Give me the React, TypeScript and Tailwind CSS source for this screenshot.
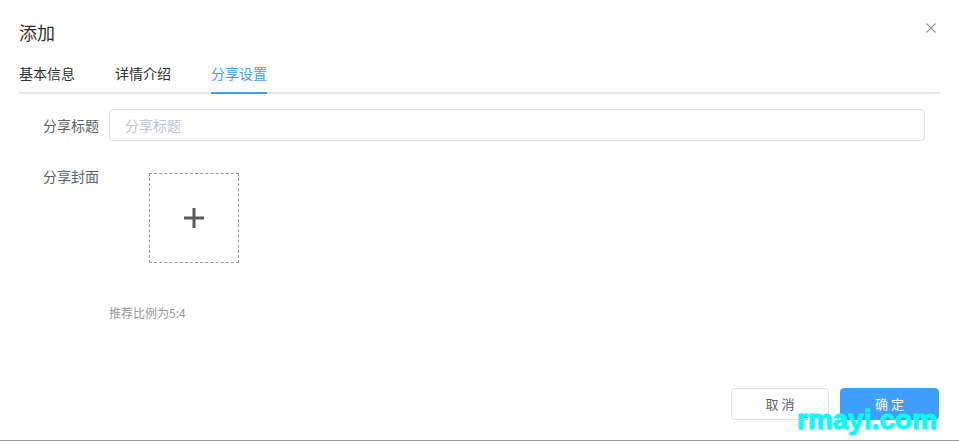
export default function App() {
  const tabs = ['基本信息', '详情介绍', '分享设置'];
  const active = 2;

  return (
    <div
      className="relative flex h-[441px] w-[959px] flex-col border-b border-[#999999] bg-white text-[#303133]"
      style={{ fontFamily: '"Noto Sans CJK SC", "Noto Sans", sans-serif' }}
    >
      {/* HEADER */}
      <div className="px-[19px] pb-[10px] pt-[20px]">
        <h2 className="text-[18px] leading-[24px] text-[#303133]">添加</h2>
      </div>
      <button className="absolute left-[926px] top-[23px] h-[10px] w-[10px] text-[#909399]">
        <svg viewBox="0 0 10 10" className="h-[10px] w-[10px]" fill="none" stroke="currentColor" strokeWidth={1.2}>
          <path d="M0.5 0.5 L9.5 9.5 M9.5 0.5 L0.5 9.5" />
        </svg>
      </button>

      {/* TABS */}
      <div className="mx-[19px] flex border-b-2 border-[#E4E7ED]">
        {tabs.map((t, i) => (
          <div
            key={t}
            className={`-mb-[2px] border-b-2 text-sm leading-[38px] ${
              i === active ? 'border-[#409EFF] text-[#409EFF]' : 'border-transparent text-[#303133]'
            } ${i === 0 ? 'mr-[20px]' : 'mx-[20px]'}`}
          >
            {t}
          </div>
        ))}
      </div>

      {/* FORM */}
      <div className="mt-[15px] pl-[19px] pr-[34px]">
        <div className="flex">
          <label className="w-[90px] shrink-0 pr-[10px] text-right text-sm leading-[32px] text-[#606266]">分享标题</label>
          <input
            placeholder="分享标题"
            className="h-[32px] flex-1 rounded-[4px] border border-[#DCDFE6] px-[15px] text-sm text-[#606266] outline-none placeholder:text-[#C0C4CC]"
          />
        </div>

        <div className="mt-[19px] flex">
          <label className="w-[90px] shrink-0 pr-[10px] text-right text-sm leading-[32px] text-[#606266]">分享封面</label>
          <div>
            <div className="pl-[40px] pt-[13px]">
              <div className="flex h-[90px] w-[90px] items-center justify-center border border-dashed border-[#999999]">
                <svg viewBox="0 0 22 22" className="h-[22px] w-[22px]" fill="none" stroke="#5a5b5e" strokeWidth={3}>
                  <path d="M11 1 V21 M1 11 H21" />
                </svg>
              </div>
            </div>
            <p className="mt-[44px] text-xs leading-[12px] text-[#999999]">推荐比例为5:4</p>
          </div>
        </div>
      </div>

      {/* FOOTER */}
      <div className="mt-auto flex justify-end gap-[11px] pb-[20px] pr-[20px]">
        <button className="h-[32px] w-[98px] rounded-[4px] border border-[#DCDFE6] bg-white text-[13px] text-[#606266]">
          取 消
        </button>
        <button className="h-[32px] w-[99px] rounded-[4px] border border-[#409EFF] bg-[#409EFF] text-[13px] text-white">
          确 定
        </button>
      </div>

      <span
        className="absolute left-[797px] top-[404px] text-[28px] font-bold leading-[32px] text-[#00FFFF] [-webkit-text-stroke:1px_#00FFFF]"
        style={{ fontFamily: '"Liberation Sans", Arial, sans-serif' }}
      >
        rmayi.com
      </span>
    </div>
  );
}
